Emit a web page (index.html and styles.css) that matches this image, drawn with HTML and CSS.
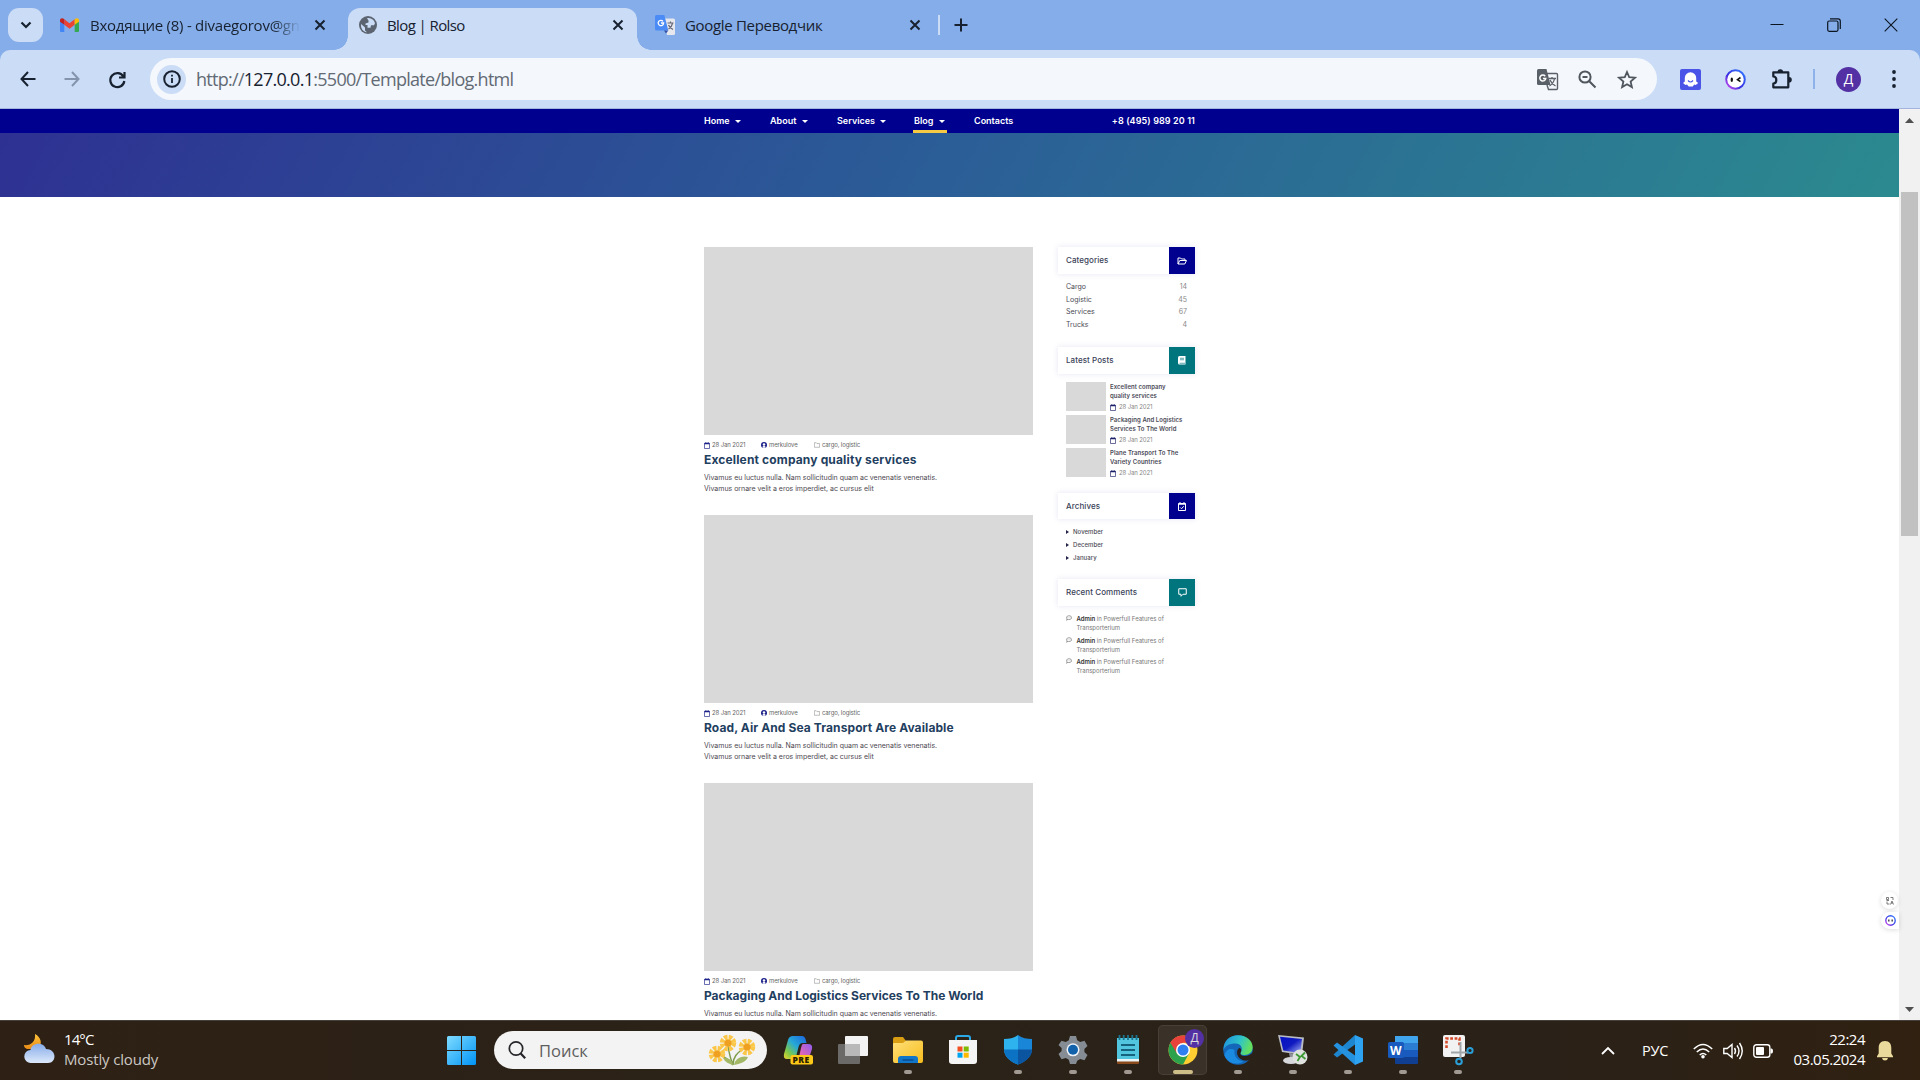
FILE: index.html
```html
<!DOCTYPE html>
<html lang="ru">
<head>
<meta charset="utf-8">
<title>Blog | Rolso</title>
<link rel="stylesheet" href="styles.css">
</head>
<body>
<svg class="defs" width="0" height="0">
  <defs>
    <linearGradient id="sky" x1="0" y1="0" x2="1" y2="1"><stop offset="0" stop-color="#7fdcff"/><stop offset="1" stop-color="#0093f5"/></linearGradient>
    <linearGradient id="cloud" x1="0" y1="0" x2="0" y2="1"><stop offset="0" stop-color="#86abe8"/><stop offset="1" stop-color="#dde9fb"/></linearGradient>
    <linearGradient id="moon" x1="0" y1="0" x2="0" y2="1"><stop offset="0" stop-color="#ffc43c"/><stop offset="1" stop-color="#ea8b16"/></linearGradient>
    <linearGradient id="coA" x1="1" y1="0" x2="0" y2="1"><stop offset="0" stop-color="#1b63dc"/><stop offset=".45" stop-color="#26a8d8"/><stop offset=".75" stop-color="#7dc84b"/><stop offset="1" stop-color="#f0d52c"/></linearGradient>
    <linearGradient id="coB" x1="1" y1="0" x2="0" y2="1"><stop offset="0" stop-color="#8f5cf0"/><stop offset=".6" stop-color="#e066b5"/><stop offset="1" stop-color="#f98a4b"/></linearGradient>
    <linearGradient id="fold" x1="0" y1="0" x2="1" y2="1"><stop offset="0" stop-color="#ffe07a"/><stop offset="1" stop-color="#f7bc1c"/></linearGradient>
    <linearGradient id="edge" x1="0" y1="0" x2="1" y2=".3"><stop offset="0" stop-color="#1e8ee0"/><stop offset=".6" stop-color="#2fc4c8"/><stop offset="1" stop-color="#62df62"/></linearGradient>
    <linearGradient id="ring" x1="0" y1="1" x2="1" y2="0"><stop offset="0" stop-color="#e24cf0"/><stop offset=".4" stop-color="#3a2fe0"/><stop offset="1" stop-color="#2f7bff"/></linearGradient>
    <linearGradient id="screen" x1="0" y1="0" x2="1" y2="1"><stop offset="0" stop-color="#0611c4"/><stop offset=".5" stop-color="#101ac0"/><stop offset="1" stop-color="#a9b4f4"/></linearGradient>
    <symbol id="i-cal" viewBox="0 0 12 14"><path d="M1 2.500h10v10.500H1z" fill="none" stroke="currentColor" stroke-width="1.300"/><path d="M1 2h10v2.500H1zM3 0h1.500v3H3zM7.500 0H9v3H7.500z" fill="currentColor"/></symbol>
    <symbol id="i-user" viewBox="0 0 16 16"><circle cx="8" cy="8" r="8" fill="currentColor"/><circle cx="8" cy="6.4" r="3.4" fill="#fff"/><path d="M3.500 14c1-4.500 8-4.500 9 0l-4.500 2z" fill="#fff"/></symbol>
    <symbol id="i-folder" viewBox="0 0 16 14"><path d="M1 1h5l2 2.200h7V13H1z" fill="none" stroke="currentColor" stroke-width="1.300"/></symbol>
    <symbol id="i-talk" viewBox="0 0 16 14"><path d="M8 1c4 0 7 2 7 5s-3 5-7 5c-1 0-2 0-3-.5L1.500 13 3 9.500C.5 8 .5 1 8 1zM4.500 6h1M7.500 6h1M10.500 6h1" fill="none" stroke="currentColor" stroke-width="1.500"/></symbol>
    <symbol id="i-x" viewBox="0 0 12 12"><path d="M1.500 1.500l9 9M10.500 1.500l-9 9" stroke="currentColor" stroke-width="2" fill="none"/></symbol>
  </defs>
</svg>

<header class="tabstrip">
  <div class="tab-search"><svg width="12" height="8" viewBox="0 0 12 8"><path d="M1.500 1.500L6 6l4.500-4.500" fill="none" stroke="#17212f" stroke-width="2.200"/></svg></div>
  <div class="tab tab-mail">
    <svg width="19" height="14" viewBox="0 0 19 14"><path d="M0 2v11q0 1 1 1h3.300V5z" fill="#4285f4"/><path d="M19 2v11q0 1-1 1h-3.300V5z" fill="#34a853"/><path d="M4.300 1.200v5.500l5.200 4 5.200-4V1.200L9.500 5.200z" fill="#ea4335"/><path d="M0 2.500v1.300l4.300 3V1.200C2.500-.4 0 0 0 2.500z" fill="#c5221f"/><path d="M19 2.500v1.300l-4.300 3V1.200C16.500-.4 19 0 19 2.500z" fill="#fbbc04"/></svg>
    <span class="tab-title t-mail">Входящие (8) - divaegorov@gn</span>
    <svg class="tab-x" width="12" height="12"><use href="#i-x"/></svg>
  </div>
  <div class="tab tab-active">
    <svg width="18" height="18" viewBox="0 0 18 18"><circle cx="9" cy="9" r="9" fill="#5b6470"/><path d="M2 8l4 3.500v3l2 1.700C3.500 15.800 1.800 12 2 8zM8 2.200c4-.8 7 1.500 8 5l-1 2h-3l-.5 2.500h-3V9H6.500V7.500l3-1V4.500z" fill="#cbdcf6"/></svg>
    <span class="tab-title t-blog">Blog | Rolso</span>
    <svg class="tab-x" width="12" height="12"><use href="#i-x"/></svg>
  </div>
  <div class="tab tab-tr">
    <svg width="20" height="20" viewBox="0 0 20 20"><path d="M8 3.500h10.500q1.500 0 1.500 1.500v13.500q0 1.500-1.500 1.500H12z" fill="#e6e8ee"/><path d="M1.500 0h7.800l4 15.500H1.500Q0 15.500 0 14V1.500Q0 0 1.500 0z" fill="#4b8bf5"/><path d="M9 15.500h4.300L11 18.500z" fill="#2f4fa8"/><path d="M8 6.300A2.700 2.700 0 1 0 8.600 8H6" stroke="#fff" stroke-width="1.300" fill="none"/><path d="M12.500 8h6M15.500 6.500V8M17.500 8c-.5 3-2 5-4 6M13.500 10c.8 2 2.500 3.500 4.500 4.500" stroke="#667" stroke-width="1.200" fill="none"/></svg>
    <span class="tab-title t-tr">Google Переводчик</span>
    <svg class="tab-x" width="12" height="12"><use href="#i-x"/></svg>
  </div>
  <i class="tab-sep"></i>
  <svg class="plus" width="14" height="14" viewBox="0 0 14 14"><path d="M7 .5v13M.5 7h13" stroke="#17212f" stroke-width="2"/></svg>
  <div class="winbtns">
    <svg width="14" height="14" viewBox="0 0 14 14"><path d="M.5 6.500h13" stroke="#0b1520"/></svg>
    <svg width="14" height="14" viewBox="0 0 14 14"><rect x=".7" y="3" width="10.300" height="10.300" rx="1.500" fill="none" stroke="#0b1520" stroke-width="1.200"/><path d="M3 .8h8q2.300 0 2.300 2.300V11" fill="none" stroke="#0b1520" stroke-width="1.200"/></svg>
    <svg width="14" height="14" viewBox="0 0 14 14"><path d="M.7.7l12.600 12.600M13.300.7L.7 13.300" stroke="#0b1520" stroke-width="1.100"/></svg>
  </div>
</header>

<div class="toolbar-back">
<div class="toolbar">
  <svg class="nav-i" width="16" height="16" viewBox="0 0 16 16"><path d="M15.500 8H1.500M8 1L1.500 8 8 15" fill="none" stroke="#17212f" stroke-width="2"/></svg>
  <svg class="nav-i" width="16" height="16" viewBox="0 0 16 16"><path d="M.5 8h14M8 1l6.500 7L8 15" fill="none" stroke="#8494ac" stroke-width="2"/></svg>
  <svg class="nav-i" width="17" height="17" viewBox="0 0 17 17"><path d="M14.300 5.500A7 7 0 1 0 15.300 10M15.500 1v5.500H10" fill="none" stroke="#17212f" stroke-width="2.200"/></svg>
  <div class="omnibox">
    <div class="info"><svg width="18" height="18" viewBox="0 0 18 18"><circle cx="9" cy="9" r="7.800" fill="none" stroke="#17212f" stroke-width="2"/><path d="M9 8v5M9 4.800v1.700" stroke="#17212f" stroke-width="1.800"/></svg></div>
    <span class="url">http://<b>127.0.0.1</b>:5500/Template/blog.html</span>
    <div class="omni-icons">
      <svg width="21" height="21" viewBox="0 0 21 21"><path d="M1.500 0h8l4 16h-12Q0 16 0 14.500v-13Q0 0 1.500 0z" fill="#5a6068"/><path d="M9.500 4.500h10q1 0 1 1v14q0 1-1 1h-8L10 16" fill="none" stroke="#5a6068" stroke-width="1.400"/><path d="M8.200 7.200A3 3 0 1 0 8.800 9.500H6" stroke="#fff" stroke-width="1.500" fill="none"/><path d="M11.500 9.500h7.500M15 8v1.500M17.500 9.500c-.5 3-2 5.500-5 7.500M13 11c1 2.500 3 4.500 5.500 6" stroke="#5a6068" stroke-width="1.300" fill="none"/></svg>
      <svg width="19" height="19" viewBox="0 0 19 19"><circle cx="7" cy="7" r="5.600" fill="none" stroke="#50565e" stroke-width="2"/><path d="M11 11l6.500 6.500M4.500 7h5" stroke="#50565e" stroke-width="2"/></svg>
      <svg width="20" height="19" viewBox="0 0 20 19"><path d="M10 2l2.200 5.200 5.800.5-4.400 3.800 1.300 5.600L10 14.200l-4.900 2.900 1.300-5.600L2 7.700l5.800-.5z" fill="none" stroke="#50565e" stroke-width="1.800"/></svg>
    </div>
  </div>
  <div class="exts">
    <svg width="21" height="21" viewBox="0 0 21 21"><rect width="21" height="21" rx="2" fill="#4a55e8"/><path d="M4.800 9a5.700 5.700 0 0 1 11.400 0v3.500l2 1.500-2.500 2-1.500-.5-1.500 2h-4L7 15.500l-1.500.5L3 14l1.800-1.500z" fill="#fff"/><path d="M8 11.500q2.500 3 5 0" stroke="#4a55e8" stroke-width="1.200" fill="none"/></svg>
    <svg width="21" height="21" viewBox="0 0 21 21"><circle cx="10.500" cy="10.500" r="9.300" fill="#fff" stroke="url(#ring)" stroke-width="2"/><ellipse cx="6.800" cy="10.800" rx="1.200" ry="2.200" fill="#111"/><path d="M15.500 8.500l-3 2.200 3 2" stroke="#111" stroke-width="1.600" fill="none"/></svg>
    <svg class="puzzle" width="21" height="21" viewBox="0 0 21 21"><path d="M2.300 3.300h15v15h-15v-3.800c4 0 4-7 0-7z" fill="none" stroke="#17212f" stroke-width="2.200" stroke-linejoin="round"/><path d="M6.500 3a2.800 2.800 0 0 1 5.600 0zM18 8a2.800 2.800 0 0 1 0 5.600z" fill="#17212f"/></svg>
    <i class="ext-sep"></i>
    <div class="avatar">Д</div>
    <svg class="dots" width="4" height="18" viewBox="0 0 4 18"><circle cx="2" cy="2" r="1.900"/><circle cx="2" cy="9" r="1.900"/><circle cx="2" cy="16" r="1.900"/></svg>
  </div>
</div>
</div>

<div class="viewport">
<main class="page">
  <nav class="menu">
    <div class="menu-in">
      <a class="m1">Home</a><a class="m2">About</a><a class="m3">Services</a><a class="m4">Blog</a><a class="m5">Contacts</a>
      <span class="phone">+8 (495) 989 20 11</span>
    </div>
  </nav>
  <div class="hero"></div>
  <div class="content">
    <section class="posts">
      <article>
        <div class="pic"></div>
        <div class="meta"><span class="d"><svg width="6" height="7"><use href="#i-cal"/></svg>28 Jan 2021</span><span class="u"><svg width="6" height="6"><use href="#i-user"/></svg>merkulove</span><span class="f"><svg width="6" height="6"><use href="#i-folder"/></svg>cargo, logistic</span></div>
        <h2 class="h-a">Excellent company quality services</h2>
        <p>Vivamus eu luctus nulla. Nam sollicitudin quam ac venenatis venenatis.<br>Vivamus ornare velit a eros imperdiet, ac cursus elit</p>
      </article>
      <article>
        <div class="pic"></div>
        <div class="meta"><span class="d"><svg width="6" height="7"><use href="#i-cal"/></svg>28 Jan 2021</span><span class="u"><svg width="6" height="6"><use href="#i-user"/></svg>merkulove</span><span class="f"><svg width="6" height="6"><use href="#i-folder"/></svg>cargo, logistic</span></div>
        <h2 class="h-b">Road, Air And Sea Transport Are Available</h2>
        <p>Vivamus eu luctus nulla. Nam sollicitudin quam ac venenatis venenatis.<br>Vivamus ornare velit a eros imperdiet, ac cursus elit</p>
      </article>
      <article>
        <div class="pic"></div>
        <div class="meta"><span class="d"><svg width="6" height="7"><use href="#i-cal"/></svg>28 Jan 2021</span><span class="u"><svg width="6" height="6"><use href="#i-user"/></svg>merkulove</span><span class="f"><svg width="6" height="6"><use href="#i-folder"/></svg>cargo, logistic</span></div>
        <h2 class="h-c">Packaging And Logistics Services To The World</h2>
        <p>Vivamus eu luctus nulla. Nam sollicitudin quam ac venenatis venenatis.</p>
      </article>
    </section>
    <aside>
      <div class="widget w1">
        <h3><span>Categories</span><i class="navy"><svg width="10" height="8" viewBox="0 0 20 16"><path d="M2 14V2h5l2 2h7v3M2 14l3.500-7H19l-3.500 7z" fill="none" stroke="#fff" stroke-width="2"/></svg></i></h3>
        <ul class="cats"><li>Cargo<em>14</em></li><li>Logistic<em>45</em></li><li>Services<em>67</em></li><li>Trucks<em>4</em></li></ul>
      </div>
      <div class="widget w2">
        <h3><span>Latest Posts</span><i class="teal"><svg width="8" height="9" viewBox="0 0 16 18"><path d="M3 0h12v17H3q-3 0-3-3V3q0-3 3-3z" fill="#fff"/><path d="M4 4.500h8M4 7.500h8M3 14.500h11" stroke="#00757d" stroke-width="1.300"/></svg></i></h3>
        <ul class="latest">
          <li><div class="thumb"></div><div><b class="la">Excellent company<br>quality services</b><small><svg width="6" height="7"><use href="#i-cal"/></svg>28 Jan 2021</small></div></li>
          <li><div class="thumb"></div><div><b class="lb">Packaging And Logistics<br>Services To The World</b><small><svg width="6" height="7"><use href="#i-cal"/></svg>28 Jan 2021</small></div></li>
          <li><div class="thumb"></div><div><b class="lc">Plane Transport To The<br>Variety Countries</b><small><svg width="6" height="7"><use href="#i-cal"/></svg>28 Jan 2021</small></div></li>
        </ul>
      </div>
      <div class="widget w3">
        <h3><span>Archives</span><i class="navy"><svg width="8" height="9" viewBox="0 0 16 18"><path d="M1 3h14v14H1zM4 0v4M12 0v4M4.500 11l2.500 2.500 4.500-5" fill="none" stroke="#fff" stroke-width="2"/><path d="M1 3h14v2.500H1z" fill="#fff"/></svg></i></h3>
        <ul class="arch"><li>November</li><li>December</li><li>January</li></ul>
      </div>
      <div class="widget w4">
        <h3><span class="rc">Recent Comments</span><i class="teal"><svg width="9" height="9" viewBox="0 0 18 18"><path d="M1.500 1.500h15v11H10L6 16.500v-4H1.500z" fill="none" stroke="#fff" stroke-width="2"/></svg></i></h3>
        <ul class="comm">
          <li><svg width="6" height="6"><use href="#i-talk"/></svg><div><b>Admin</b> in Powerfull Features of<br>Transporterium</div></li>
          <li><svg width="6" height="6"><use href="#i-talk"/></svg><div><b>Admin</b> in Powerfull Features of<br>Transporterium</div></li>
          <li><svg width="6" height="6"><use href="#i-talk"/></svg><div><b>Admin</b> in Powerfull Features of<br>Transporterium</div></li>
        </ul>
      </div>
    </aside>
  </div>
  <div class="float f1"><svg width="8" height="8" viewBox="0 0 16 16"><path d="M1 5V1h4v4zM9 1h5v5M2 9v5h5M9 15l3-7 3 7M10 12h4M1 7h5" fill="none" stroke="#666" stroke-width="1.700"/></svg></div>
  <div class="float f2"><svg width="11" height="11" viewBox="0 0 21 21"><circle cx="10.500" cy="10.500" r="9" fill="#fff" stroke="url(#ring)" stroke-width="2.600"/><path d="M7.300 8.500v4M13.700 8.500v4" stroke="#223" stroke-width="2.400"/></svg></div>
</main>
<div class="scroll">
  <svg width="9" height="5" viewBox="0 0 9 5"><path d="M4.500 0L9 5H0z" fill="#505050"/></svg>
  <i></i>
  <svg class="down" width="9" height="5" viewBox="0 0 9 5"><path d="M4.500 5L0 0h9z" fill="#505050"/></svg>
</div>
</div>

<footer class="taskbar">
  <div class="weather">
    <svg width="31" height="30" viewBox="0 0 31 30"><path d="M11 0c6 3 8 10 3 15H3c-2-1-3-2-3-4 6 1 12-3 11-11z" fill="url(#moon)"/><path d="M7 29a6.500 6.500 0 0 1-.5-13C7.500 8 20 7.500 22 15c11 0 11 14 2 14z" fill="url(#cloud)"/></svg>
    <div><span class="temp">14°C</span><span class="cond">Mostly cloudy</span></div>
  </div>
  <svg class="start" width="29" height="29" viewBox="0 0 29 29"><path d="M0 1.500Q0 0 1.500 0H14v14H0zM15 0h12.500Q29 0 29 1.500V14H15zM0 15h14v14H1.500Q0 29 0 27.500zM15 15h14v12.500q0 1.500-1.500 1.500H15z" fill="url(#sky)"/></svg>
  <div class="search">
    <svg width="18" height="18" viewBox="0 0 18 18"><circle cx="8" cy="7.500" r="6.700" fill="none" stroke="#25252a" stroke-width="1.700"/><path d="M12.700 12.500l4.500 4.800" stroke="#25252a" stroke-width="2.200"/></svg>
    <span>Поиск</span>
    <svg class="flowers" width="48" height="32" viewBox="0 0 48 32"><path d="M25 31C22 24 21 18 20 12M25 31c0-8 4-12 10-16M25 31c-4-5-8-8-13-10" stroke="#7f9c4c" stroke-width="1.500" fill="none"/><path d="M25 31c-1-6-6-8-10-7 2 4 6 6 10 7zM26 31c1-6 7-10 14-8-2 5-8 7-14 8z" fill="#a3b866"/><g fill="none" stroke="#fbc748" stroke-width="5.500" stroke-dasharray="3.200 1.120"><circle cx="20" cy="9" r="5.500"/><circle cx="39" cy="13" r="5.500"/><circle cx="9" cy="20" r="5.500"/></g><g fill="#f0a020"><circle cx="20" cy="9" r="3.600"/><circle cx="39" cy="13" r="3.600"/><circle cx="9" cy="20" r="3.600"/></g></svg>
  </div>
  <div class="apps">
    <div class="app"><svg width="30" height="30" viewBox="0 0 30 30"><path d="M10 1h9q2.500 0 3.500 3l1 4h-4q-3 0-4 4l-2 8q-1 4-5 4H4q-4 0-3-5L5 5q1-4 5-4z" fill="url(#coA)"/><path d="M20 9h5q5 0 4 5l-3 9q-1 4-5 4h-9q3-1 4-5l2-9q1-4 2-4z" fill="url(#coB)"/><rect x="7.500" y="20" width="22.500" height="9.500" rx="2" fill="#ffc917"/><text x="9.500" y="28" class="pre">PRE</text></svg></div>
    <div class="app"><svg width="30" height="30" viewBox="0 0 30 30"><rect x="7" y="1" width="23" height="20" rx="1" fill="#f3f3f3"/><rect x="0" y="9" width="22" height="20" rx="1" fill="#777" opacity=".85"/><rect x="7" y="9" width="15" height="12" fill="#b9b9b9"/></svg></div>
    <div class="app run"><svg width="30" height="30" viewBox="0 0 30 30"><path d="M0 4q0-2 2-2h8l3 4h10v5H0z" fill="#d99d14"/><path d="M0 9q0-1 1-1h9l3-2.500h15q2 0 2 2V26q0 2-2 2H2q-2 0-2-2z" fill="url(#fold)"/><path d="M5 28v-4q0-3 3-3h14q3 0 3 3v4z" fill="#1276c8"/><path d="M9.500 25h11" stroke="#0b4f93" stroke-width="1.600"/></svg></div>
    <div class="app"><svg width="30" height="30" viewBox="0 0 30 30"><path d="M8 6V3q0-2 2-2h10q2 0 2 2v3" fill="none" stroke="#2aa9e6" stroke-width="2"/><path d="M1 5h28v21q0 3-3 3H4q-3 0-3-3z" fill="#f5f5f5"/><path d="M9.500 11.500h5v5h-5z" fill="#f25022"/><path d="M15.700 11.500h5v5h-5z" fill="#7fba00"/><path d="M9.500 17.700h5v5h-5z" fill="#00a4ef"/><path d="M15.700 17.700h5v5h-5z" fill="#ffb900"/></svg></div>
    <div class="app run"><svg width="30" height="30" viewBox="0 0 30 30"><path d="M15 0c4 3 9 4 14 4v10c0 8-7 13-14 15.500z" fill="#1a86d8"/><path d="M15 0C11 3 6 4 1 4v10c0 8 7 13 14 15.500z" fill="#2fb3ef"/><path d="M1 14.500h14v15C8 27 1 22 1 14.500z" fill="#0c73c4"/><path d="M29 14.500H15v15c7-2.500 14-7.500 14-15z" fill="#0b55a0"/></svg></div>
    <div class="app run"><svg width="30" height="30" viewBox="0 0 30 30"><path d="M12 1h6l1.200 4.200 3 1.800 4.300-1.300 3 5.200-3.100 3.100v3l3.100 3.100-3 5.200-4.300-1.300-3 1.800L18 29h-6l-1.200-4.200-3-1.800-4.300 1.300-3-5.200L3.600 16v-3L.5 9.900l3-4.200L7.800 7l3-1.800z" fill="#858c94"/><circle cx="15" cy="14.800" r="6.500" fill="#eef3f8"/><circle cx="15" cy="14.800" r="5" fill="#1161ab"/></svg></div>
    <div class="app run"><svg width="30" height="30" viewBox="0 0 30 30"><path d="M4 26h22v2q0 1-1 1H5q-1 0-1-1z" fill="#8a4a1c"/><path d="M4 3h22v23H4z" fill="#52c6df"/><path d="M4 24h22v2.500H4z" fill="#eaf3f5"/><path d="M6.500 0v5M10.700 0v5M15 0v5M19.300 0v5M23.500 0v5" stroke="#1c7590" stroke-width="1.800"/><path d="M8 10h14M8 15h14M8 20h14" stroke="#16617c" stroke-width="1.900"/></svg></div>
    <div class="app run active"><svg width="30" height="30" viewBox="0 0 30 30"><circle cx="15" cy="15" r="14.500" fill="#ffce31"/><path d="M15 15L2.400 7.800A14.500 14.500 0 0 0 15 29.500l6-11z" fill="#2ca24c"/><path d="M2.400 7.800A14.500 14.500 0 0 1 27.600 7.800H15L9 18.500z" fill="#e8423a"/><circle cx="15" cy="15" r="7" fill="#fff"/><circle cx="15" cy="15" r="5.500" fill="#2f7ff0"/></svg><span class="badge">Д</span></div>
    <div class="app run"><svg width="30" height="30" viewBox="0 0 30 30"><circle cx="15" cy="15" r="14.700" fill="#1467b8"/><path d="M.5 14C1 5 7 .3 15 .3c9 0 14.700 6 14.700 12 0 5-4 7.700-8 7.700-3.500 0-5-1-4-2.500 3-4 0-9-5-9C6 8.500 1 11 .5 16z" fill="url(#edge)"/><path d="M17.700 17.500c-1 2 1 3.500 4 3.500 3.500 0 6-1.200 8.300-4v3.500l-2 3.500c-1.500 1-4 2-6.500 1.500-4-.5-7.500-4-7.500-8 0-2.500 1.500-4.500 3-4.500 1.500 1 1.500 3 .7 4.500z" fill="#2b2118"/><path d="M11.500 15c-1 6 3 11 9 11.500-8 5-17 0-19-6C3 14 8 13 11.500 15z" fill="#1a8be0"/></svg></div>
    <div class="app run"><svg width="30" height="30" viewBox="0 0 30 30"><path d="M0 0l26 2.500L24 20 4 17z" fill="#b9bcc4"/><path d="M2 1.700l22 2.200L22.300 18 5.300 15.500z" fill="url(#screen)"/><path d="M11 18l6 1 1 4h-6z" fill="#8f9299"/><ellipse cx="13" cy="25.500" rx="8" ry="3.500" fill="#d7d8dc"/><circle cx="22" cy="22" r="7.500" fill="#dfe2de"/><path d="M18 19l4 3-2.500 4M27 17.500L23.500 21l4 3" fill="none" stroke="#3d9b34" stroke-width="1.800"/></svg></div>
    <div class="app run"><svg width="30" height="30" viewBox="0 0 30 30"><path d="M22 0v9.500L4 22.500.5 19.500z" fill="#1d86cf"/><path d="M22 30v-9.500L4 7.500.5 10.500z" fill="#2592e0"/><path d="M22 0l8 3.500v23L22 30z" fill="#2ea3f2"/></svg></div>
    <div class="app run"><svg width="30" height="30" viewBox="0 0 30 30"><path d="M7 1h22q1 0 1 1v6H7z" fill="#41a5ee"/><path d="M7 8h23v7H7z" fill="#2b7cd3"/><path d="M7 15h23v7H7z" fill="#185abd"/><path d="M7 22h23v6q0 1-1 1H8q-1 0-1-1z" fill="#103f91"/><rect x="0" y="7" width="16" height="16" rx="1.500" fill="#185abd"/><text x="2" y="19.500" class="word">W</text></svg></div>
    <div class="app run"><svg width="30" height="30" viewBox="0 0 30 30"><rect x="0" y="0" width="22" height="22" rx="2" fill="#f2f2f2"/><path d="M3.500 13V3.500h13V11" fill="none" stroke="#d44a28" stroke-width="2.600" stroke-dasharray="2.800 1.600"/><path d="M17.500 7v16M8 17.500h17" stroke="#a0a5aa" stroke-width="2"/><circle cx="27" cy="15.500" r="2.600" fill="none" stroke="#2a9fd8" stroke-width="2"/><circle cx="16" cy="26.500" r="2.800" fill="none" stroke="#2a9fd8" stroke-width="2"/></svg></div>
  </div>
  <div class="tray">
    <svg class="up" width="14" height="8" viewBox="0 0 14 8"><path d="M1 7l6-6 6 6" fill="none" stroke="#fff" stroke-width="1.800"/></svg>
    <span class="lang">РУС</span>
    <svg class="wifi" width="20" height="16" viewBox="0 0 20 16"><g fill="none" stroke="#fff" stroke-width="1.500"><path d="M.8 6q9.200-9 18.400 0M3.800 9q6.200-6 12.400 0M6.700 12q3.300-3 6.600 0"/></g><circle cx="10" cy="13.700" r="1.800" fill="#fff"/></svg>
    <svg class="vol" width="20" height="18" viewBox="0 0 20 18"><path d="M.8 6.500v5h3.400L9 15.500v-13L4.200 6.500zM11.500 6q2 3 0 6M14 3.500q4 5.500 0 11M16.500 1q5.500 8 0 16" fill="none" stroke="#fff" stroke-width="1.400"/></svg>
    <svg class="bat" width="20" height="14" viewBox="0 0 20 14"><rect x=".8" y=".8" width="16" height="12.400" rx="2.500" fill="none" stroke="#fff" stroke-width="1.400"/><rect x="3" y="3" width="8" height="8" rx="1" fill="#fff"/><path d="M17.500 4.500h1q1.500 0 1.500 2.500t-1.500 2.500h-1z" fill="#fff"/></svg>
    <div class="clock"><span>22:24</span><span>03.05.2024</span></div>
    <svg class="bell" width="16" height="20" viewBox="0 0 16 20"><path d="M8 0c4.500 0 6.300 3 6.300 7v5.500l1.700 2.700v1H0v-1l1.700-2.700V7C1.700 3 3.500 0 8 0zM5 17h6q-.5 2.500-3 2.500T5 17z" fill="#eadb9c"/></svg>
  </div>
</footer>
</body>
</html>
```
FILE: styles.css
```css
* { box-sizing: border-box; }
body { margin: 0; width: 1920px; height: 1080px; overflow: hidden; background: #fff; font-family: "Open Sans", "Noto Sans", sans-serif; display: flex; flex-direction: column; }
svg { display: block; flex: none; overflow: visible; }
ul, h2, h3, p { margin: 0; padding: 0; list-style: none; }
.defs { position: absolute; }

/* browser tabs */
.tabstrip { height: 50px; background: #85ade9; display: flex; align-items: flex-start; flex: none; color: #17212f; }
.tab-search { width: 35px; height: 34px; margin: 8px 0 0 8px; border-radius: 11px; background: #cbdcf6; display: grid; place-items: center; flex: none; }
.tab { display: flex; align-items: center; height: 42px; margin-top: 8px; padding-bottom: 8px; flex: none; }
.tab-title { font-size: 15px; line-height: 20px; white-space: nowrap; margin-left: 10px; }
.tab-x { margin-left: auto; }
.tab-mail { width: 305px; padding-left: 17px; padding-right: 22px; }
.t-mail { width: 215px; margin-left: 11px; letter-spacing: -.25px; -webkit-mask-image: linear-gradient(90deg, #000 85%, transparent 98%); mask-image: linear-gradient(90deg, #000 85%, transparent 98%); }
.tab-active { width: 289px; padding-left: 11px; padding-right: 13px; background: #cbdcf6; border-radius: 12px 12px 0 0; position: relative; }
.tab-active::before, .tab-active::after { content: ""; position: absolute; bottom: 0; width: 14px; height: 14px; }
.tab-active::before { left: -14px; background: radial-gradient(circle at 0 0, transparent 13.5px, #cbdcf6 14px); }
.tab-active::after { right: -14px; background: radial-gradient(circle at 100% 0, transparent 13.5px, #cbdcf6 14px); }
.t-blog { letter-spacing: -.6px; }
.tab-tr { width: 289px; padding-left: 18px; padding-right: 5px; }
.t-tr { letter-spacing: -.32px; }
.tab-sep { width: 2px; height: 20px; background: #cbdcf6; margin: 15px 0 0 12px; }
.plus { margin: 18px 0 0 14px; }
.winbtns { display: flex; gap: 43px; margin: 18px 22px 0 auto; }

/* address row */
.toolbar-back { background: #85ade9; flex: none; }
.toolbar { height: 59px; background: #cbdcf6; border-radius: 10px 10px 0 0; border-bottom: 1px solid #a4b4dc; display: flex; align-items: center; padding-left: 20px; }
.nav-i { margin-right: 28px; }
.nav-i:nth-child(2) { margin-right: 29px; }
.nav-i:nth-child(3) { margin-right: 24px; }
.omnibox { width: 1507px; height: 42px; border-radius: 21px; background: #f4f7fc; display: flex; align-items: center; padding-left: 7px; flex: none; }
.info { width: 29px; height: 29px; border-radius: 50%; background: #cbdcf6; display: grid; place-items: center; }
.url { font-size: 18px; line-height: 24px; color: #626a74; margin-left: 10px; letter-spacing: -.72px; white-space: nowrap; }
.url b { font-weight: 400; color: #17212f; }
.omni-icons { margin: 0 20px 0 auto; display: flex; align-items: center; gap: 20px; }
.exts { display: flex; align-items: center; flex: 1; padding-left: 23px; }
.exts svg + svg { margin-left: 24px; }
.exts .puzzle { margin-left: 25px; }
.ext-sep { width: 2px; height: 20px; background: #8db1e9; margin: 0 21px 0 21px; }
.avatar { width: 25px; height: 25px; border-radius: 50%; background: #5330a3; color: #fff; font-size: 14px; line-height: 23px; text-align: center; }
.dots { margin-left: 31px; fill: #17212f; }

/* site */
.viewport { height: 911px; display: flex; overflow: hidden; flex: none; }
.page { width: 1899px; position: relative; font-family: Inter, "Open Sans", sans-serif; color: #4a4a55; flex: none; }
.menu { height: 24px; background: #00008f; }
.menu-in { width: 491px; margin-left: 704px; display: flex; height: 24px; line-height: 24px; color: #fff; font-size: 9px; font-weight: 600; white-space: nowrap; }
.menu-in a { display: flex; align-items: center; letter-spacing: 0; }
.menu-in a:not(.m5)::after { content: ""; border: 3px solid transparent; border-top: 3px solid #fff; border-bottom: 0; margin: 1px 0 0 auto; }
.m1 { width: 37px; margin-right: 29px; }
.m2 { width: 38px; margin-right: 29px; }
.m3 { width: 49px; margin-right: 27px; }
.m4 { width: 34px; margin-right: 27px; padding: 0 2px 0 1px; box-shadow: inset 0 -3px #f6c945; }
.phone { margin-left: auto; letter-spacing: .1px; }
.hero { height: 64px; background: linear-gradient(120deg, #2e3192, #2b5c97 48%, #2b8a8f); }
.content { display: flex; margin: 50px 0 0 704px; width: 491px; justify-content: space-between; }
.posts { width: 329px; }
article { height: 268px; }
.pic { height: 188px; background: #d9d9d9; }
.meta { display: flex; height: 10px; margin-top: 5px; font-size: 6px; line-height: 10px; letter-spacing: -.12px; color: #666; white-space: nowrap; }
.meta span { display: flex; align-items: center; gap: 2px; }
.meta .d { width: 57px; }
.meta .u { width: 53px; }
.meta svg { color: #1b1f88; }
.meta .f svg { color: #777; }
h2 { font-size: 12px; line-height: 18px; margin-top: 1px; color: #1f4060; font-weight: 700; white-space: nowrap; }
.h-a { letter-spacing: .15px; }
.h-b { letter-spacing: .1px; }
article p { font-size: 7px; line-height: 11px; margin-top: 3px; letter-spacing: -.02px; color: #4c4750; white-space: nowrap; }
aside { width: 137px; }
.widget h3 { height: 27px; display: flex; justify-content: space-between; align-items: center; padding-left: 8px; box-shadow: 0 0 6px rgba(70, 80, 180, .14); font-size: 8px; font-weight: 500; color: #3a3f58; background: #fff; white-space: nowrap; }
.widget h3 span { padding-bottom: 1px; letter-spacing: .07px; }
h3 i { width: 26px; height: 27px; display: grid; place-items: center; }
.navy { background: #00008f; }
.teal { background: #00757d; }
.w1 { height: 100px; }
.w2 { height: 146px; }
.w3 { height: 86px; }
.w3 h3, .w3 h3 i { height: 26px; }
.cats { padding: 7px 8px 0; font-size: 7px; line-height: 12.7px; }
.cats li { display: flex; justify-content: space-between; }
.cats em { font-style: normal; color: #888; }
.latest { padding: 8px 0 0 8px; }
.latest li { display: flex; gap: 4px; height: 33px; white-space: nowrap; }
.thumb { width: 40px; height: 29px; background: #d9d9d9; flex: none; }
.latest b { display: block; font-size: 6px; line-height: 9px; font-weight: 600; letter-spacing: .05px; color: #4b4b58; }
.latest small { display: flex; align-items: center; gap: 3px; font-size: 6px; line-height: 8px; margin-top: 3px; letter-spacing: -.12px; color: #888; }
.latest small svg { color: #1b1f68; }
.arch { padding: 6px 0 0 8px; font-size: 6px; font-weight: 500; line-height: 13px; }
.arch li { display: flex; align-items: center; gap: 4px; letter-spacing: .05px; }
.arch li::before { content: ""; border: 2px solid transparent; border-left: 3px solid #23234a; border-right: 0; }
.comm { padding: 8px 0 0 8px; font-size: 6px; line-height: 9px; color: #777; white-space: nowrap; }
.comm li { display: flex; gap: 4.5px; height: 21.5px; }
.comm svg { margin-top: 1px; color: #555; }
.comm b { font-weight: 600; color: #333; }
.float { position: absolute; display: grid; place-items: center; background: #fff; box-shadow: 0 1px 5px rgba(0, 0, 0, .14); }
.f1 { left: 1881px; top: 783px; width: 17px; height: 17px; border-radius: 50%; }
.f2 { left: 1881px; top: 803px; width: 18px; height: 17px; border-radius: 9px 0 0 9px; }
.scroll { width: 21px; background: #f1f1f1; display: flex; flex-direction: column; align-items: center; padding: 9px 0 8px; }
.scroll i { width: 17px; height: 344px; background: #c1c1c1; margin-top: 69px; }
.scroll .down { margin-top: auto; }

/* taskbar */
.taskbar { height: 60px; background: linear-gradient(90deg, #2e2014, #2b2218 35%, #2a2118 80%, #302111); border-top: 1px solid #45403a; display: flex; color: #fff; flex: none; position: relative; }
.weather { display: flex; width: 447px; padding: 13px 0 0 24px; gap: 9px; font-size: 15px; line-height: 20px; flex: none; }
.weather div { margin-top: -5px; }
.weather span { display: block; }
.temp { letter-spacing: -.9px; }
.cond { color: #ccc8c4; letter-spacing: -.15px; }
.start { margin-top: 15px; }
.search { width: 273px; height: 38px; margin: 10px 0 0 18px; border-radius: 19px; background: #f3f3f3; display: flex; align-items: center; padding: 0 11px 0 14px; color: #5e5e5e; font-size: 16.5px; flex: none; }
.search span { margin-left: 13px; }
.flowers { margin-left: auto; }
.apps { display: flex; gap: 6px; margin: 4px 0 0 6px; }
.app { width: 49px; height: 50px; display: flex; justify-content: center; padding-top: 10px; position: relative; border-radius: 5px; flex: none; }
.run::after { content: ""; position: absolute; bottom: 1px; left: 21px; width: 8px; height: 4px; border-radius: 2px; background: #a09a93; }
.active { background: #3a3128; box-shadow: inset 0 0 0 1px #483f36; }
.active::after { width: 20px; left: 15px; background: #cdbd86; }
.badge { position: absolute; left: 27px; top: 4px; width: 19px; height: 19px; border-radius: 50%; background: #5330a3; color: #ddd; font-size: 12px; line-height: 17px; text-align: center; }
.pre { font: 800 8.5px "Open Sans", sans-serif; letter-spacing: .4px; fill: #2b2100; }
.word { font: 700 12px "Open Sans", sans-serif; fill: #fff; }
.tray { display: flex; align-items: center; margin-left: auto; padding-right: 27px; font-size: 15px; }
.lang { margin: 0 24px 0 27px; width: 27px; font-size: 14.5px; letter-spacing: -.2px; }
.vol { margin: 0 10px; }
.clock { width: 92px; text-align: right; line-height: 20px; margin: -3px 12px 0 0; letter-spacing: -.5px; }
.clock span { display: block; }
```
